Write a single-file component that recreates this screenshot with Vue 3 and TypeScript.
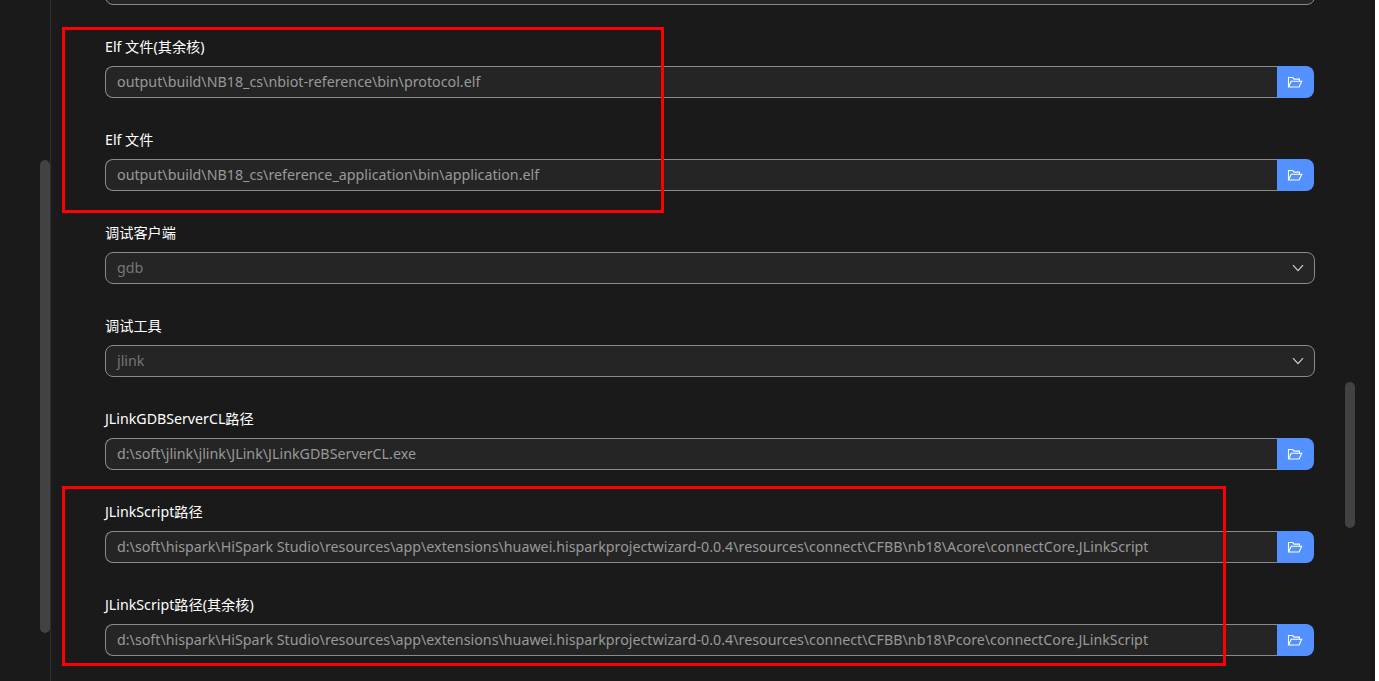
<script setup lang="ts">
interface Field {
  label: string
  value: string
  kind: 'file' | 'select'
}

const fields: Field[] = [
  { label: 'Elf 文件(其余核)', value: 'output\\build\\NB18_cs\\nbiot-reference\\bin\\protocol.elf', kind: 'file' },
  { label: 'Elf 文件', value: 'output\\build\\NB18_cs\\reference_application\\bin\\application.elf', kind: 'file' },
  { label: '调试客户端', value: 'gdb', kind: 'select' },
  { label: '调试工具', value: 'jlink', kind: 'select' },
  { label: 'JLinkGDBServerCL路径', value: 'd:\\soft\\jlink\\jlink\\JLink\\JLinkGDBServerCL.exe', kind: 'file' },
  { label: 'JLinkScript路径', value: 'd:\\soft\\hispark\\HiSpark Studio\\resources\\app\\extensions\\huawei.hisparkprojectwizard-0.0.4\\resources\\connect\\CFBB\\nb18\\Acore\\connectCore.JLinkScript', kind: 'file' },
  { label: 'JLinkScript路径(其余核)', value: 'd:\\soft\\hispark\\HiSpark Studio\\resources\\app\\extensions\\huawei.hisparkprojectwizard-0.0.4\\resources\\connect\\CFBB\\nb18\\Pcore\\connectCore.JLinkScript', kind: 'file' }
]
</script>

<template>
  <div class="page">
    <aside class="rail">
      <div class="rail-thumb"></div>
    </aside>
    <main class="content">
      <div class="form">
        <div class="control clipped"></div>
        <section v-for="f in fields" :key="f.label" class="field">
          <label class="label">{{ f.label }}</label>
          <div v-if="f.kind === 'file'" class="file-row">
            <div class="control file-input">{{ f.value }}</div>
            <button class="browse" type="button" aria-label="browse">
              <svg width="16" height="16" viewBox="0 0 16 16" fill="none" stroke="#fff" stroke-width="1.1">
                <path d="M1.5 13V3.5h4.2l1.3 1.6h5.5v2.2" />
                <path d="M1.5 13h10.6l2.6-5.7H4.2L1.5 13z" />
              </svg>
            </button>
          </div>
          <div v-else class="control select">
            <span>{{ f.value }}</span>
            <svg class="chevron" width="12" height="8" viewBox="0 0 12 8" fill="none" stroke="#d0d0d0" stroke-width="1.2">
              <path d="M1 1.2l5 5.4 5-5.4" />
            </svg>
          </div>
        </section>
      </div>
      <div class="scroll-thumb"></div>
    </main>
    <div class="mark mark-a"></div>
    <div class="mark mark-b"></div>
  </div>
</template>

<style scoped>
.page {
  position: relative;
  display: flex;
  width: 1375px;
  height: 681px;
  overflow: hidden;
  background: #1a1a1a;
  font-family: "Noto Sans", "Noto Sans CJK SC", sans-serif;
}
.rail {
  position: relative;
  flex: none;
  width: 51px;
  box-sizing: border-box;
  border-right: 1px solid #303030;
}
.rail-thumb {
  position: absolute;
  left: 40px;
  top: 160px;
  width: 10px;
  height: 473px;
  border-radius: 5px;
  background: #424242;
}
.content {
  position: relative;
  flex: 1;
  min-width: 0;
  padding: 0 60px 0 54px;
}
.form {
  margin-top: -27px;
}
.field {
  margin-top: 29px;
}
.label {
  display: block;
  height: 32px;
  padding-top: 3px;
  box-sizing: border-box;
  line-height: 20px;
  font-size: 14.2px;
  color: #fff;
}
.control {
  box-sizing: border-box;
  height: 32px;
  border: 1px solid #8a8a8a;
  border-radius: 8px;
  background: #252525;
  color: #999999;
  font-size: 14.28px;
  line-height: 30px;
  padding: 0 11px;
  white-space: nowrap;
}
.file-row {
  display: flex;
  width: 1209px;
}
.file-input {
  flex: 1;
  min-width: 0;
  border-radius: 8px 0 0 8px;
  border-right: 0;
}
.browse {
  flex: none;
  display: flex;
  align-items: center;
  justify-content: center;
  width: 37px;
  height: 32px;
  padding: 0 2px 0 0;
  border: 0;
  border-radius: 0 8px 8px 0;
  background: #5291ff;
}
.select {
  display: flex;
  align-items: center;
  justify-content: space-between;
  width: 1210px;
  padding-right: 10px;
  color: #767676;
}
.chevron {
  flex: none;
}
.scroll-thumb {
  position: absolute;
  left: 1294px;
  top: 382px;
  width: 10px;
  height: 146px;
  border-radius: 5px;
  background: #424242;
}
.mark {
  position: absolute;
  box-sizing: border-box;
  border: 3px solid #ff0000;
  pointer-events: none;
}
.mark-a {
  left: 62px;
  top: 27px;
  width: 602px;
  height: 186px;
}
.mark-b {
  left: 62px;
  top: 486px;
  width: 1164px;
  height: 180px;
}
</style>

<style>
html,
body {
  margin: 0;
  background: #fff;
}
</style>
